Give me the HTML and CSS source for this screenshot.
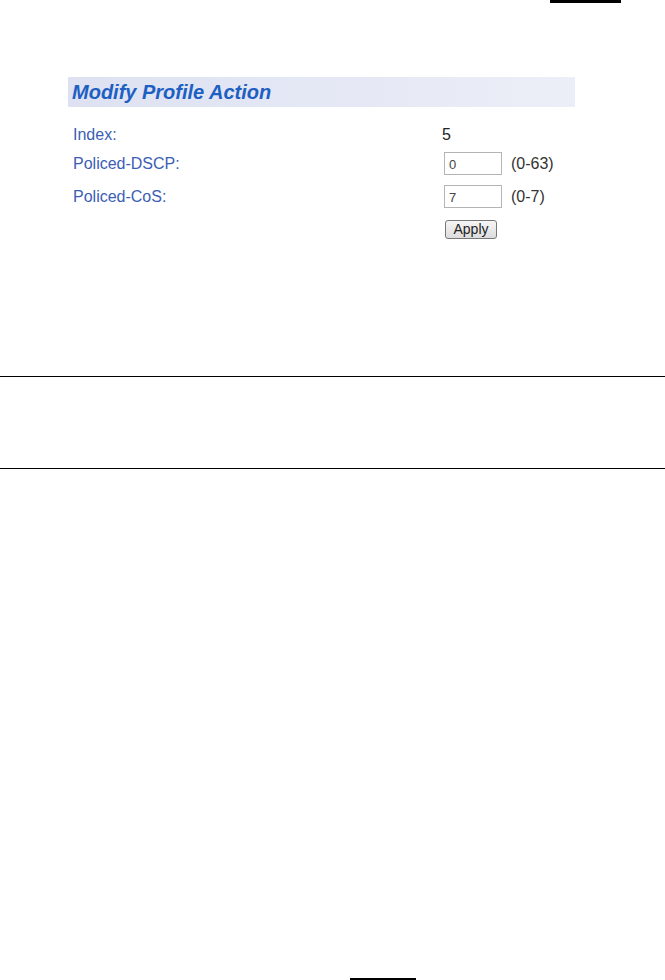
FILE: index.html
```html
<html>
  <head>
    <title>Modify Profile Action</title>
<link rel="stylesheet" href="styles.css">
  </head>
  <body>
    <div class="top-mark"></div>

    <div class="panel">
      <h2 class="panel-title">Modify Profile Action</h2>
      <div class="form">
        <div class="row row-index">
          <span class="label">Index:</span>
          <span class="value">5</span>
        </div>
        <div class="row row-field">
          <span class="label">Policed-DSCP:</span>
          <span class="value">
            <input type="text" class="field" value="0" />
            <span class="range">(0-63)</span>
          </span>
        </div>
        <div class="row row-field row-cos">
          <span class="label">Policed-CoS:</span>
          <span class="value">
            <input type="text" class="field" value="7" />
            <span class="range">(0-7)</span>
          </span>
        </div>
        <div class="row row-apply">
          <span class="label"></span>
          <span class="value">
            <input type="button" class="apply" value="Apply" />
          </span>
        </div>
      </div>
    </div>

    <hr class="rule rule-first" />
    <hr class="rule rule-second" />

    <div class="bottom-mark"></div>
  </body>
</html>
```

FILE: styles.css
```css
body {
  margin: 0;
  background-color: #fff;
  font-family: "Liberation Sans", Arial, sans-serif;
  width: 665px;
  height: 980px;
  overflow: hidden;
  display: flex;
  flex-direction: column;
}
.top-mark {
  margin-left: 550px;
  width: 71px;
  height: 3px;
  background-color: #000;
}
.panel {
  margin: 74px 0 0 68px;
  width: 507px;
}
.panel-title {
  margin: 0;
  height: 30px;
  line-height: 30px;
  padding-left: 4px;
  background: linear-gradient(to right, #dde1f1, #e6e9f5 60%, #eceef7);
  color: #1d5fc2;
  font-size: 20px;
  font-style: italic;
  font-weight: bold;
}
.form {
  padding: 18px 0 0 5px;
  display: flex;
  flex-direction: column;
}
.row {
  display: grid;
  grid-template-columns: 369px auto;
  align-items: center;
  font-size: 16px;
}
.label {
  color: #3b5eb4;
}
.value {
  color: #222;
  display: flex;
  align-items: center;
}
.row-index {
  height: 20px;
}
.row-field {
  height: 23px;
  margin-top: 7px;
}
.row-cos {
  margin-top: 10px;
}
.row-apply {
  height: 20px;
  margin-top: 11px;
}
.field {
  box-sizing: border-box;
  width: 58px;
  height: 23px;
  margin: 0 0 0 2px;
  padding: 1px 4px 0;
  border: 1px solid #b4b4b4;
  font-family: "Liberation Sans", Arial, sans-serif;
  font-size: 13px;
  color: #444;
}
.range {
  margin-left: 9px;
  color: #333;
}
.apply {
  box-sizing: border-box;
  width: 52px;
  height: 19px;
  margin: 0 0 0 3px;
  padding: 0;
  border: 1px solid #777;
  border-radius: 3px;
  background: linear-gradient(#f6f6f6, #dcdcdc);
  font-family: "Liberation Sans", Arial, sans-serif;
  font-size: 14px;
  color: #222;
}
.rule {
  margin: 0;
  border: 0;
  height: 1px;
  width: 665px;
  background-color: #000;
}
.rule-first {
  margin-top: 137px;
}
.rule-second {
  margin-top: 91px;
}
.bottom-mark {
  margin: auto 0 0 350px;
  width: 66px;
  height: 2px;
  background-color: #000;
}
```
